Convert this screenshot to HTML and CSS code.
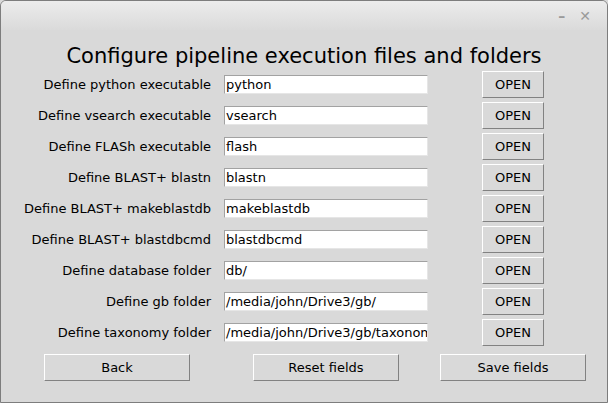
FILE: index.html
```html
<!DOCTYPE html>
<html>
<head>
<meta charset="utf-8">
<link rel="stylesheet" href="styles.css">
</head>
<body>
<div class="window">
  <div class="titlebar">
    <span class="ctl ctl-min">–</span>
    <span class="ctl ctl-close">✕</span>
  </div>
  <div class="content">
    <h1 class="title">Configure pipeline execution files and folders</h1>
    <div class="rows">
      <div class="row"><span class="label">Define python executable</span><div class="entry">python</div><button class="btn open">OPEN</button></div>
      <div class="row"><span class="label">Define vsearch executable</span><div class="entry">vsearch</div><button class="btn open">OPEN</button></div>
      <div class="row"><span class="label">Define FLASh executable</span><div class="entry">flash</div><button class="btn open">OPEN</button></div>
      <div class="row"><span class="label">Define BLAST+ blastn</span><div class="entry">blastn</div><button class="btn open">OPEN</button></div>
      <div class="row"><span class="label">Define BLAST+ makeblastdb</span><div class="entry">makeblastdb</div><button class="btn open">OPEN</button></div>
      <div class="row"><span class="label">Define BLAST+ blastdbcmd</span><div class="entry">blastdbcmd</div><button class="btn open">OPEN</button></div>
      <div class="row"><span class="label">Define database folder</span><div class="entry">db/</div><button class="btn open">OPEN</button></div>
      <div class="row"><span class="label">Define gb folder</span><div class="entry">/media/john/Drive3/gb/</div><button class="btn open">OPEN</button></div>
      <div class="row"><span class="label">Define taxonomy folder</span><div class="entry">/media/john/Drive3/gb/taxonomy/</div><button class="btn open">OPEN</button></div>
    </div>
    <div class="actions">
      <button class="btn action">Back</button>
      <button class="btn action">Reset fields</button>
      <button class="btn action">Save fields</button>
    </div>
  </div>
</div>
</body>
</html>
```

FILE: styles.css
```css
* { box-sizing: border-box; }
html, body { margin: 0; padding: 0; background: #d9d9d9; }
body { font-family: "DejaVu Sans", sans-serif; color: #000; }

.window {
  width: 608px;
  height: 403px;
  border: 1px solid #7d7d7d;
  border-radius: 6px 6px 0 0;
  background: #d9d9d9;
  display: flex;
  flex-direction: column;
  overflow: hidden;
}

.titlebar {
  height: 29px;
  flex: none;
  background: linear-gradient(#ececec, #dadada);
  display: flex;
  justify-content: flex-end;
  align-items: center;
  gap: 14px;
  padding-right: 16px;
}
.ctl {
  color: #9a9a9a;
  font-size: 14px;
  font-weight: bold;
  line-height: 14px;
}

.content {
  flex: 1;
  display: flex;
  flex-direction: column;
}

.title {
  margin: 12px 0 0 0;
  height: 29px;
  font-weight: normal;
  font-size: 21px;
  line-height: 29px;
  text-align: center;
}

.rows {
  display: flex;
  flex-direction: column;
  gap: 4px;
}
.row {
  display: grid;
  grid-template-columns: 211px 216px 116px;
  align-items: center;
  height: 27px;
}
.label {
  font-size: 13px;
  text-align: right;
  padding-right: 1px;
}
.entry {
  margin-left: 12px;
  height: 19px;
  background: #fff;
  border: 1px solid;
  border-color: #a2a2a2 #e6e6e6 #e6e6e6 #a2a2a2;
  font-size: 13px;
  line-height: 17px;
  padding-left: 1px;
  white-space: nowrap;
  overflow: hidden;
}
.open { margin-left: 54px; width: 62px; }

.btn {
  font-family: "DejaVu Sans", sans-serif;
  font-size: 13px;
  color: #000;
  background: #d9d9d9;
  border: 1px solid;
  border-color: #ffffff #828282 #828282 #ffffff;
  padding: 0;
  height: 27px;
}

.actions {
  margin-top: 8px;
  display: flex;
  padding-left: 43px;
}
.action { width: 146px; height: 27px; }
.action + .action { margin-left: 63px; }
.action:last-child { margin-left: 41px; }
```
